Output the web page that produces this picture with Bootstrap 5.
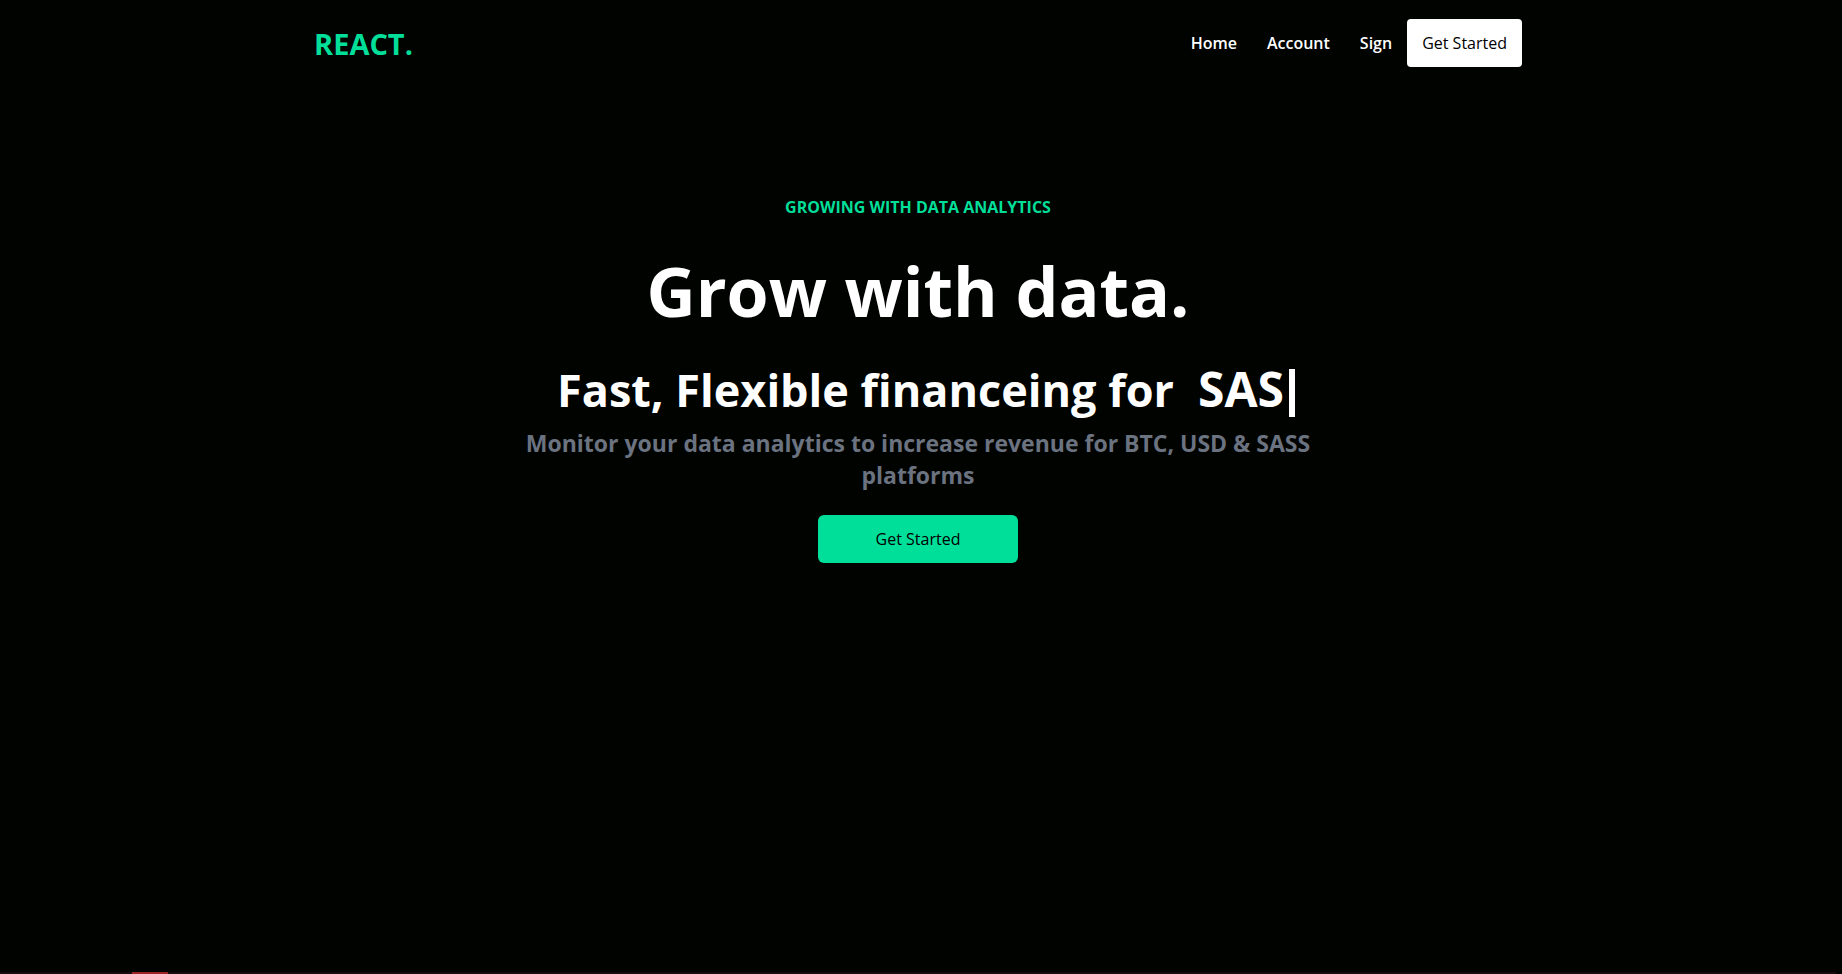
<!DOCTYPE html>
<html lang="en">
<head>
<meta charset="utf-8">
<meta name="viewport" content="width=device-width, initial-scale=1">
<title>REACT.</title>
<link href="https://cdn.jsdelivr.net/npm/bootstrap@5.3.0/dist/css/bootstrap.min.css" rel="stylesheet">
<style>
  body { background: #000300; color: #fff; font-family: "Open Sans", "Noto Sans", sans-serif; font-size: 16px; line-height: 24px; padding-right: 6px; }
  .site-nav { max-width: 1240px; height: 86px; }
  .brand { color: #00df9a; font-size: 29px; line-height: 36px; font-weight: 700; padding-top: 2px; }
  .site-nav .nav-link { color: #fff; font-size: 16px; font-weight: 600; padding: 12px 15px; }
  .cta { --bs-btn-color: #000; --bs-btn-bg: #00df9a; --bs-btn-hover-bg: #00c78a; --bs-btn-border-width: 0; --bs-btn-font-size: 16px; --bs-btn-line-height: 24px; --bs-btn-font-weight: 500; --bs-btn-padding-y: 12px; --bs-btn-padding-x: 15px; --bs-btn-border-radius: 6px; }
  .cta-light { --bs-btn-bg: #fff; --bs-btn-hover-bg: #ddd; --bs-btn-border-radius: 4px; }
  .cta-wide { width: 200px; }
  .hero { max-width: 800px; padding-top: 109px; }
  .eyebrow { color: #00df9a; font-size: 16px; font-weight: 700; }
  .hero h1 { font-size: 68px; line-height: 72px; font-weight: 700; margin: 0; padding: 36px 0 22px; }
  .tagline { font-size: 45px; line-height: 48px; font-weight: 700; padding: 16px 0 10px; }
  .typed { font-size: 48px; }
  .caret { width: 6px; height: 48px; margin-left: 5px; background: #fff; }
  .subtitle { color: #6b7280; font-size: 23px; line-height: 32px; font-weight: 700; }
  .progress-line { height: 2px; background: #160c0f; }
  .progress-mark { width: 36px; height: 2px; margin-left: 132px; background: #9b2226; }
</style>
</head>
<body class="d-flex flex-column min-vh-100">
<header>
  <nav class="site-nav w-100 mx-auto px-3 d-flex align-items-center justify-content-between">
    <a class="brand text-decoration-none" href="#">REACT.</a>
    <div class="d-flex align-items-center">
      <ul class="nav">
        <li class="nav-item"><a class="nav-link" href="#">Home</a></li>
        <li class="nav-item"><a class="nav-link" href="#">Account</a></li>
        <li class="nav-item"><a class="nav-link" href="#">Sign</a></li>
      </ul>
      <button type="button" class="btn cta cta-light">Get Started</button>
    </div>
  </nav>
</header>
<main class="hero w-100 mx-auto text-center d-flex flex-column align-items-center flex-grow-1">
  <p class="eyebrow mb-0">GROWING WITH DATA ANALYTICS</p>
  <h1>Grow with data.</h1>
  <div class="tagline ms-3 d-flex justify-content-center align-items-baseline">
    <span>Fast, Flexible financeing for</span><span class="typed ps-4">SAS</span><span class="caret align-self-start mt-1"></span>
  </div>
  <p class="subtitle mb-0">Monitor your data analytics to increase revenue for BTC, USD &amp; SASS platforms</p>
  <button type="button" class="btn cta cta-wide my-4">Get Started</button>
</main>
<div class="progress-line"><div class="progress-mark"></div></div>
<script src="https://cdn.jsdelivr.net/npm/bootstrap@5.3.0/dist/js/bootstrap.bundle.min.js"></script>
</body>
</html>
